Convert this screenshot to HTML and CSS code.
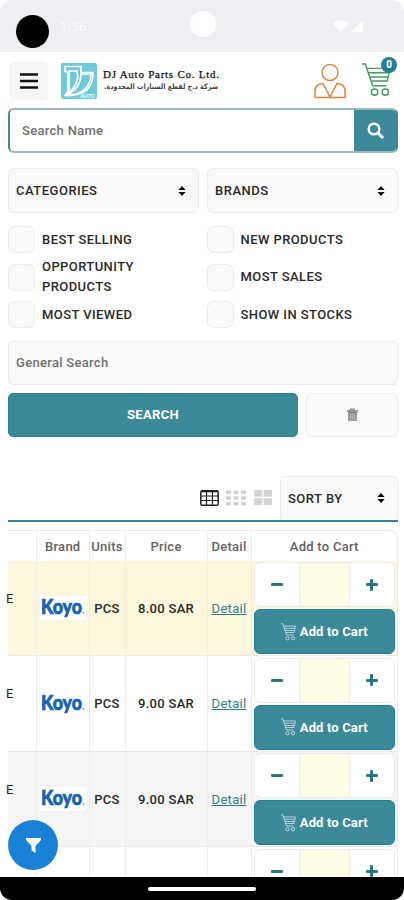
FILE: index.html
```
<!DOCTYPE html>
<html lang="en">
<head>
<meta charset="utf-8">
<title>DJ Auto Parts</title>
<link rel="stylesheet" href="styles.css">
</head>
<body>
<svg width="0" height="0" class="defs">
  <symbol id="cart" viewBox="0 0 32 36"><g fill="none" stroke="currentColor" stroke-width="1.5"><path d="M1 1.500h3.500L12 24h14M6 6h24l-3 13H11M7.500 10.500h21M9 15h19"/><circle cx="14" cy="30.500" r="3.300"/><circle cx="25" cy="30.500" r="3.300"/></g></symbol>
  <symbol id="sort" viewBox="0 0 8 10"><path d="M4 0 7.600 4H.4zM4 10 .4 6h7.200z"/></symbol>
</svg>
<div class="phone">
  <div class="status">
    <span class="dot"></span><span class="time">1:56</span><span class="camera"></span>
    <svg class="signals" width="31" height="14" viewBox="0 0 31 14" fill="#fff"><path d="M0 3Q8-3 16 3L8 12zM30 0v12H18z"/></svg>
  </div>
  <header class="header">
    <button class="menu"><svg width="18" height="16" viewBox="0 0 18 16"><path d="M0 1.500h18M0 8h18M0 14.500h18" stroke="#111" stroke-width="2.400"/></svg></button>
    <svg class="logo" width="36" height="36" viewBox="0 0 36 36"><rect width="36" height="36" rx="2" fill="#6fc9d9"/><path d="M4 3.500H20V9.500H32Q32 27 18 31Q12 33 4 32.500L7 28V10L4 8z" fill="none" stroke="#fff" stroke-width="1.700"/><path d="M8 8H16Q19 20 8 30zM20 11L30 11Q29 27 15 31Q8 32 6 31Q19 27 20 11z" fill="#6fc9d9" stroke="#fff" stroke-width="1.700"/><text x="19.500" y="34.500" class="logo-auto" textLength="14" lengthAdjust="spacingAndGlyphs">AUTO</text></svg>
    <svg class="company" width="120" height="32" viewBox="0 0 120 32"><text x="0" y="15" class="company-en" textLength="116">DJ Auto Parts Co. Ltd.</text><text x="115" y="26" direction="rtl" class="company-ar" textLength="114" lengthAdjust="spacingAndGlyphs">شركة د.ج لقطع السيارات المحدودة.</text></svg>
    <svg class="user" width="32" height="36" viewBox="0 0 32 36" fill="none" stroke="#e5833e" stroke-width="1.500"><circle cx="16" cy="9.500" r="8"/><path d="M1 34.500V28q0-7 8-7.500L16 34l7-13.500q8 .5 8 7.500v6.500z"/></svg>
    <div class="basket"><svg width="31" height="36"><use href="#cart"/></svg><span class="badge">0</span></div>
  </header>
  <div class="search-name"><span>Search Name</span><button><svg width="17" height="17" viewBox="0 0 17 17" fill="none" stroke="#fff"><circle cx="7" cy="7" r="5.300" stroke-width="2.500"/><path d="m11 11 5 5" stroke-width="3"/></svg></button></div>
  <div class="filters">
    <div class="select"><span>CATEGORIES</span><svg width="8" height="10"><use href="#sort"/></svg></div>
    <div class="select"><span>BRANDS</span><svg width="8" height="10"><use href="#sort"/></svg></div>
  </div>
  <div class="checks">
    <label><i></i>BEST SELLING</label><label><i></i>NEW PRODUCTS</label>
    <label><i></i><span>OPPORTUNITY<br>PRODUCTS</span></label><label><i></i>MOST SALES</label>
    <label><i></i>MOST VIEWED</label><label><i></i>SHOW IN STOCKS</label>
  </div>
  <div class="general">General Search</div>
  <div class="actions"><button class="go">SEARCH</button><button class="clear"><svg width="11" height="13" viewBox="0 0 11 13"><path d="M0 2h3V.5h5V2h3v2H0zM1 5h9v8H1z" fill="#999"/><path d="M1 4.500h9" stroke="#777"/><path d="M3.500 5v8M5.500 5v8M7.500 5v8M1 9h9" stroke="#bbb" stroke-width=".6"/></svg></button></div>
  <div class="toolbar">
    <svg width="19" height="16" viewBox="0 0 19 16" fill="none" stroke="#222"><rect x=".8" y=".8" width="17.400" height="14.400" rx="1.500" stroke-width="1.500"/><path d="M1 1.500h17" stroke-width="1.600"/><path d="M1 6h17M1 10.500h17M6.500 1v14M12.500 1v14" stroke-width="1.200"/></svg>
    <svg class="grid3" width="20" height="16" viewBox="0 0 20 16"><path d="M0 2.200h20M0 8h20M0 13.800h20" stroke="#d4d4d4" stroke-width="3.400" stroke-dasharray="5 2.500"/></svg>
    <svg class="grid2" width="18" height="15" viewBox="0 0 18 15" fill="#d4d4d4"><rect width="8.300" height="6.800" rx="1"/><rect x="9.700" width="8.300" height="6.800" rx="1"/><rect y="8.200" width="8.300" height="6.800" rx="1"/><rect x="9.700" y="8.200" width="8.300" height="6.800" rx="1"/></svg>
    <div class="select sortby"><span>SORT BY</span><svg width="8" height="10"><use href="#sort"/></svg></div>
  </div>
  <div class="table">
    <div class="row head"><div></div><div>Brand</div><div>Units</div><div>Price</div><div>Detail</div><div>Add to Cart</div></div>
    <div class="row yellow"><div class="name"><span>E</span></div><div class="brand"><svg width="46" height="24"><text x="1" y="18" textLength="41" lengthAdjust="spacingAndGlyphs">Koyo</text><circle cx="43.500" cy="17" r="1"/></svg></div><div>PCS</div><div>8.00 SAR</div><div><a>Detail</a></div><div class="buy"><div class="qty"><b class="minus"></b><i></i><b class="plus"></b></div><button><svg width="17" height="18"><use href="#cart"/></svg>Add to Cart</button></div></div>
    <div class="row"><div class="name"><span>E</span></div><div class="brand"><svg width="46" height="24"><text x="1" y="18" textLength="41" lengthAdjust="spacingAndGlyphs">Koyo</text><circle cx="43.500" cy="17" r="1"/></svg></div><div>PCS</div><div>9.00 SAR</div><div><a>Detail</a></div><div class="buy"><div class="qty"><b class="minus"></b><i></i><b class="plus"></b></div><button><svg width="17" height="18"><use href="#cart"/></svg>Add to Cart</button></div></div>
    <div class="row gray"><div class="name"><span>E</span></div><div class="brand"><svg width="46" height="24"><text x="1" y="18" textLength="41" lengthAdjust="spacingAndGlyphs">Koyo</text><circle cx="43.500" cy="17" r="1"/></svg></div><div>PCS</div><div>9.00 SAR</div><div><a>Detail</a></div><div class="buy"><div class="qty"><b class="minus"></b><i></i><b class="plus"></b></div><button><svg width="17" height="18"><use href="#cart"/></svg>Add to Cart</button></div></div>
    <div class="row last"><div></div><div></div><div></div><div></div><div></div><div class="buy"><div class="qty"><b class="minus"></b><i></i><b class="plus"></b></div></div></div>
  </div>
  <button class="fab"><svg width="15" height="15" viewBox="0 0 15 15" fill="#fff"><path d="M0 0h15v2L9.500 8v7l-4-2.500V8L0 2z"/></svg></button>
  <div class="navbar"><span></span></div>
</div>
</body>
</html>
```
FILE: styles.css
```
* { box-sizing: border-box; }
body { margin: 0; background: #fff; }
button { border: 0; padding: 0; font: inherit; display: flex; align-items: center; justify-content: center; }
svg { overflow: visible; }
.defs { position: absolute; }
.phone { position: relative; width: 404px; height: 900px; overflow: hidden; font: 500 13px Roboto, sans-serif; letter-spacing: .3px; color: #292929; display: flex; flex-direction: column; }
.status { height: 52px; flex: none; background: #f0eef2; border-radius: 13px 13px 0 0; display: flex; align-items: flex-start; padding: 11px 40px 0 16px; color: #fafafa; }
.dot { width: 33px; height: 33px; margin-top: 4px; border-radius: 50%; background: #000; }
.time { margin: 8px 0 0 11px; width: 29px; font-size: 13px; }
.camera { width: 26px; height: 26px; margin-left: 101px; border-radius: 50%; background: #fff; }
.signals { margin: 9px 0 0 auto; }
.header { height: 56px; flex: none; display: flex; align-items: flex-start; padding: 10px 7px 0 9px; }
.menu { width: 39px; height: 38px; border-radius: 5px; background: #f5f5f5; }
.logo { margin: 1px 0 0 13px; }
.logo-auto { font: italic 700 5px "Liberation Sans", sans-serif; fill: #fff; letter-spacing: 0; }
.company { margin: 1px 0 0 6px; }
.company-en { font: 500 11px "Liberation Serif", serif; fill: #111; stroke: #111; stroke-width: .25px; letter-spacing: 0; }
.company-ar { font: 700 7.500px "DejaVu Sans", sans-serif; fill: #444; letter-spacing: 0; }
.user { margin: 1px 0 0 auto; }
.basket { position: relative; width: 36px; margin-left: 15px; color: #459b62; }
.badge { position: absolute; right: 0; top: -5px; width: 16px; height: 16px; border-radius: 50%; background: #2b7e92; color: #fff; font-size: 10px; font-weight: 700; line-height: 16px; text-align: center; letter-spacing: 0; }
.search-name { flex: none; height: 45px; margin: 0 6px 0 8px; border: 2px solid #9ab7bd; border-left-color: #438b9b; border-right-color: #3c899a; border-radius: 6px; display: flex; align-items: center; justify-content: space-between; padding-left: 12px; color: #717171; overflow: hidden; }
.search-name button { width: 42px; height: 45px; background: #3c899a; }
.filters { display: grid; grid-template-columns: 1fr 1fr; gap: 8px; margin: 15px 6px 0 8px; flex: none; }
.select { height: 45px; border: 1px solid #ececec; border-radius: 6px; background: #fafafa; display: flex; align-items: center; justify-content: space-between; padding: 0 12px 0 7px; letter-spacing: .5px; }
.checks { flex: none; display: grid; grid-template-columns: 198.500px 1fr; grid-auto-rows: 37.500px; margin: 8px 0 0 8px; }
.checks label { display: flex; align-items: center; line-height: 20px; letter-spacing: .42px; }
.checks i { flex: none; width: 27px; height: 27px; margin-right: 7px; border: 1px solid #ebebeb; border-radius: 7px; background: #fafafa; }
.general { flex: none; height: 44px; margin: 7px 6px 0 8px; border: 1px solid #ebebeb; border-radius: 5px; background: #fafafa; line-height: 42px; padding-left: 7px; color: #717171; }
.actions { display: flex; gap: 8px; margin: 8px 6px 0 8px; height: 44px; flex: none; }
.go { width: 290px; border-radius: 5px; background: #3c899a; color: #fff; font-weight: 700; border: 1px solid #2b8292; letter-spacing: .3px; }
.clear { flex: 1; border: 1px solid #ebebeb; border-radius: 5px; background: #fafafa; }
.toolbar { flex: none; height: 46px; margin: 39px 6px 0 8px; border-bottom: 2px solid #348394; display: flex; align-items: center; padding-left: 192px; }
.grid3 { margin-left: 7px; }
.grid2 { margin-left: 8px; }
.sortby { flex: 1; height: 44px; margin-left: 8px; border-bottom: 0; border-radius: 5px 5px 0 0; }
.table { flex: none; margin: 8px 6px 0 8px; border: 1px solid #ececec; border-left: 0; border-bottom: 0; border-radius: 0 8px 0 0; }
.row { display: grid; grid-template-columns: 29px 52.500px 36px 82px 44px 1fr; height: 95.500px; border-bottom: 1px solid #e9e9e9; }
.row > div { display: flex; align-items: center; justify-content: center; border-right: 1px solid #ececec; white-space: nowrap; padding-top: 1px; }
.row > div:last-child { border-right: 0; }
.row.head { height: 30px; color: #686064; border-bottom: 0; letter-spacing: .25px; }
.row.yellow { background: #fcf8de; }
.row.gray { background: #f5f5f5; }
.row .name { justify-content: flex-start; padding-bottom: 20px; font-weight: 400; }
.name span { margin-left: -2px; }
.brand svg { background: #fff; }
.brand text { font: 900 20px Lato, sans-serif; letter-spacing: 0; fill: #1763ae; stroke: #1763ae; stroke-width: .7px; }
.brand circle { fill: #72a1ce; }
.row a { color: #31808f; text-decoration: underline; font-weight: 400; }
.row .buy { flex-direction: column; justify-content: flex-start; padding: 1.500px 2px 0; gap: 2px; }
.qty { width: 100%; height: 45px; flex: none; display: grid; grid-template-columns: 44px 51px 1fr; border: 1px solid #ececec; border-radius: 7px; background: #fff; overflow: hidden; }
.qty i { background: #fefce6; border: solid #ececec; border-width: 0 1px; }
.qty b { display: grid; place-items: center; }
.minus::before, .plus::before, .plus::after { content: ""; grid-area: 1 / 1; width: 12px; height: 3px; border-radius: 1px; background: #28798c; }
.plus::after { width: 3px; height: 12px; }
.buy button { width: 100%; height: 45px; flex: none; gap: 3px; border: 1px solid #247f90; border-radius: 6px; background: #3c899a; color: #fff; font-weight: 700; letter-spacing: .15px; padding-right: 1px; }
.buy button svg { color: #dbe9ec; }
.fab { position: absolute; left: 8px; top: 820px; width: 50px; height: 50px; border-radius: 50%; background: #1982d7; }
.navbar { position: absolute; left: 0; right: 0; bottom: 0; height: 23px; border-radius: 0 0 12px 12px; background: #000; display: flex; align-items: center; justify-content: center; }
.navbar span { width: 108px; height: 4px; border-radius: 2px; background: #fff; }
```
